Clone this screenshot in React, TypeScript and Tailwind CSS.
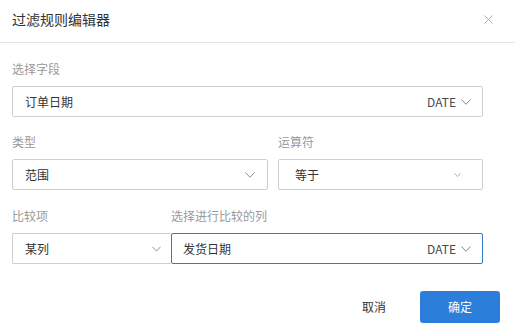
import React from 'react';

const Chevron = ({ className = '' }: { className?: string }) => (
  <svg viewBox="0 0 10 6" className={className} fill="none">
    <polyline points="0.5,0.5 5,5.3 9.5,0.5" stroke="currentColor" strokeWidth="1" />
  </svg>
);

type FieldLabelProps = { children: React.ReactNode };

const FieldLabel = ({ children }: FieldLabelProps) => (
  <div className="text-[12px] leading-[17px] text-[#9a9a9a] mb-[9px]">{children}</div>
);

export default function App() {
  return (
    <div className="w-[515px] h-[327px] bg-white font-['Noto_Sans_CJK_SC',sans-serif] text-[#333]">
      {/* Header */}
      <div className="h-[43px] border-b border-[#e3e3e3] flex items-center justify-between pl-[12px] pr-[22px]">
        <div className="text-[14px] leading-[20px] text-[#333] -mt-[4px]">过滤规则编辑器</div>
        <svg viewBox="0 0 10 10" className="w-[9px] h-[9px] text-[#a8a8a8] -mt-[4px]" fill="none">
          <path d="M0.5 0.5 L9.5 9.5 M9.5 0.5 L0.5 9.5" stroke="currentColor" strokeWidth="1" />
        </svg>
      </div>

      {/* Body */}
      <div className="pl-[12px] pr-[32px] pt-[17px]">
        <FieldLabel>选择字段</FieldLabel>
        <div className="h-[31px] border border-[#cfcfcf] rounded-[2px] flex items-center justify-between pl-[12px] pr-[11px] text-[12px]">
          <span>订单日期</span>
          <span className="flex items-center gap-[5px] text-[#4a4a4a]">
            DATE
            <Chevron className="w-[10px] h-[6px] text-[#8a8a8a]" />
          </span>
        </div>

        <div className="flex gap-[10px] mt-[16px]">
          <div className="w-[256px]">
            <FieldLabel>类型</FieldLabel>
            <div className="h-[31px] border border-[#cfcfcf] rounded-[2px] flex items-center justify-between pl-[12px] pr-[12px] text-[12px]">
              <span>范围</span>
              <Chevron className="w-[10px] h-[6px] text-[#8a8a8a]" />
            </div>
          </div>
          <div className="flex-1">
            <FieldLabel>运算符</FieldLabel>
            <div className="h-[31px] border border-[#cfcfcf] rounded-[2px] flex items-center justify-between pl-[16px] pr-[21px] text-[12px]">
              <span>等于</span>
              <Chevron className="w-[7px] h-[4px] text-[#8a8a8a]" />
            </div>
          </div>
        </div>

        <div className="flex mt-[17px]">
          <div className="w-[159px]">
            <FieldLabel>比较项</FieldLabel>
            <div className="h-[31px] border border-r-0 border-[#cfcfcf] rounded-l-[2px] flex items-center justify-between pl-[12px] pr-[10px] text-[12px]">
              <span>某列</span>
              <Chevron className="w-[9px] h-[6px] text-[#8a8a8a]" />
            </div>
          </div>
          <div className="flex-1">
            <FieldLabel>选择进行比较的列</FieldLabel>
            <div className="h-[31px] border border-[#2f7cc4] rounded-[2px] flex items-center justify-between pl-[11px] pr-[11px] text-[12px]">
              <span>发货日期</span>
              <span className="flex items-center gap-[5px] text-[#4a4a4a]">
                DATE
                <Chevron className="w-[10px] h-[6px] text-[#8a8a8a]" />
              </span>
            </div>
          </div>
        </div>
      </div>

      {/* Footer */}
      <div className="flex justify-end items-center gap-[6px] pr-[15px] mt-[27px]">
        <button className="w-[80px] h-[32px] text-[12px] text-[#333]">取消</button>
        <button className="w-[80px] h-[32px] rounded-[3px] bg-[#2b7fdb] text-[12px] text-white">确定</button>
      </div>
    </div>
  );
}
